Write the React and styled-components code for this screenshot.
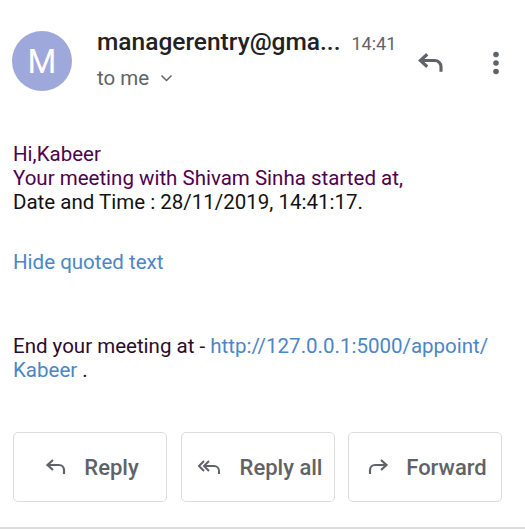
import React from "react";
import styled, { createGlobalStyle } from "styled-components";

const Global = createGlobalStyle`
  html, body { margin: 0; padding: 0; background: #fff; }
  body { font-family: Roboto, "Noto Sans", Arial, sans-serif; }
`;

const Page = styled.div`
  width: 525px;
  height: 529px;
  box-sizing: border-box;
  display: flex;
  flex-direction: column;
  border-bottom: 2px solid #dcdcdc;
  overflow: hidden;
`;

const Header = styled.div`
  display: flex;
  align-items: flex-start;
  padding: 31px 0 0 12px;
  height: 92px;
  box-sizing: border-box;
`;

const Avatar = styled.div`
  width: 60px;
  height: 60px;
  border-radius: 50%;
  background: #9fa8da;
  color: #fff;
  display: flex;
  align-items: center;
  justify-content: center;
  font-size: 33px;
  font-family: Roboto, Arial, sans-serif;
  flex-shrink: 0;
`;

const Meta = styled.div`
  margin-left: 25px;
  display: flex;
  flex-direction: column;
  flex: 1;
`;

const TopLine = styled.div`
  display: flex;
  align-items: baseline;
  gap: 11px;
  margin-top: -4px;
`;

const Sender = styled.span`
  font-size: 24.5px;
  font-weight: 500;
  color: #202124;
`;

const Time = styled.span`
  font-size: 18px;
  color: #5f6368;
`;

const ToMe = styled.div`
  display: flex;
  align-items: center;
  gap: 11px;
  font-size: 20.5px;
  color: #5f6368;
  margin-top: 10px;
`;

const Actions = styled.div`
  display: flex;
  align-items: center;
  gap: 46px;
  margin: 17px 25px 0 0;
`;

const IconBtn = styled.div`
  display: flex;
  align-items: center;
  justify-content: center;
  color: #5f6368;
`;

const Body = styled.div`
  padding: 50px 13px 0 13px;
  font-size: 20.5px;
  line-height: 24px;
`;

const Quoted = styled.div`
  color: ${(p) => p.color || "#500050"};
`;

const Link = styled.a`
  color: #4a86c8;
  text-decoration: none;
`;

const HideQuoted = styled.div`
  color: #4a86c8;
  margin-top: 36px;
`;

const EndLine = styled.div`
  margin-top: 60px;
  color: #2d0a2d;
`;

const Buttons = styled.div`
  display: grid;
  grid-template-columns: repeat(3, 154px);
  column-gap: 13.5px;
  padding: 0 0 0 13px;
  margin-top: auto;
  margin-bottom: 25px;
`;

const ActionButton = styled.div`
  height: 70px;
  box-sizing: border-box;
  border: 1px solid #dadce0;
  border-radius: 5px;
  display: flex;
  align-items: center;
  justify-content: center;
  gap: 16px;
  color: #5f6368;
  font-size: 22px;
  font-weight: 500;
  padding-left: 3px;
`;

const ReplyIcon = ({ size = 24, w = 2.2 }) => (
  <svg width={size} height={size} viewBox="0 0 24 24" fill="none">
    <path d="M9 5 L3.5 10 L9 15" stroke="currentColor" strokeWidth={w} />
    <path d="M4 10 H15 A5 5 0 0 1 20 15 V19" stroke="currentColor" strokeWidth={w} />
  </svg>
);

const ReplyAllIcon = () => (
  <svg width="28" height="24" viewBox="0 0 28 24" fill="none">
    <path d="M8 6 L3 11 L8 16" stroke="currentColor" strokeWidth="2" />
    <path d="M13 6 L8 11 L13 16" stroke="currentColor" strokeWidth="2" />
    <path d="M9 11 H18 A5 5 0 0 1 23 16 V19" stroke="currentColor" strokeWidth="2" />
  </svg>
);

const ForwardIcon = () => (
  <svg width="24" height="24" viewBox="0 0 24 24" fill="none">
    <path d="M15 5 L20.5 10 L15 15" stroke="currentColor" strokeWidth="2.2" />
    <path d="M20 10 H9 A5 5 0 0 0 4 15 V19" stroke="currentColor" strokeWidth="2.2" />
  </svg>
);

const Chevron = () => (
  <svg width="13" height="8" viewBox="0 0 13 8" fill="none">
    <path d="M1.5 1.5 L6.5 6.5 L11.5 1.5" stroke="currentColor" strokeWidth="1.5" />
  </svg>
);

const MoreIcon = () => (
  <svg width="8" height="24" viewBox="0 0 8 24" fill="currentColor">
    <circle cx="4" cy="3.5" r="2.8" />
    <circle cx="4" cy="12" r="2.8" />
    <circle cx="4" cy="20.5" r="2.8" />
  </svg>
);

export default function App() {
  return (
    <>
      <Global />
      <Page>
        <Header>
          <Avatar>M</Avatar>
          <Meta>
            <TopLine>
              <Sender>managerentry@gma...</Sender>
              <Time>14:41</Time>
            </TopLine>
            <ToMe>
              to me <Chevron />
            </ToMe>
          </Meta>
          <Actions>
            <IconBtn><ReplyIcon size={30} w={2.5} /></IconBtn>
            <IconBtn><MoreIcon /></IconBtn>
          </Actions>
        </Header>
        <Body>
          <Quoted>Hi,Kabeer</Quoted>
          <Quoted>Your meeting with Shivam Sinha started at,</Quoted>
          <Quoted color="#111">Date and Time : 28/11/2019, 14:41:17.</Quoted>
          <HideQuoted>Hide quoted text</HideQuoted>
          <EndLine>
            End your meeting at - <Link href="#">http://127.0.0.1:5000/appoint/</Link>
            <br />
            <Link href="#">Kabeer</Link> .
          </EndLine>
        </Body>
        <Buttons>
          <ActionButton><ReplyIcon />Reply</ActionButton>
          <ActionButton><ReplyAllIcon />Reply all</ActionButton>
          <ActionButton><ForwardIcon />Forward</ActionButton>
        </Buttons>
      </Page>
    </>
  );
}
